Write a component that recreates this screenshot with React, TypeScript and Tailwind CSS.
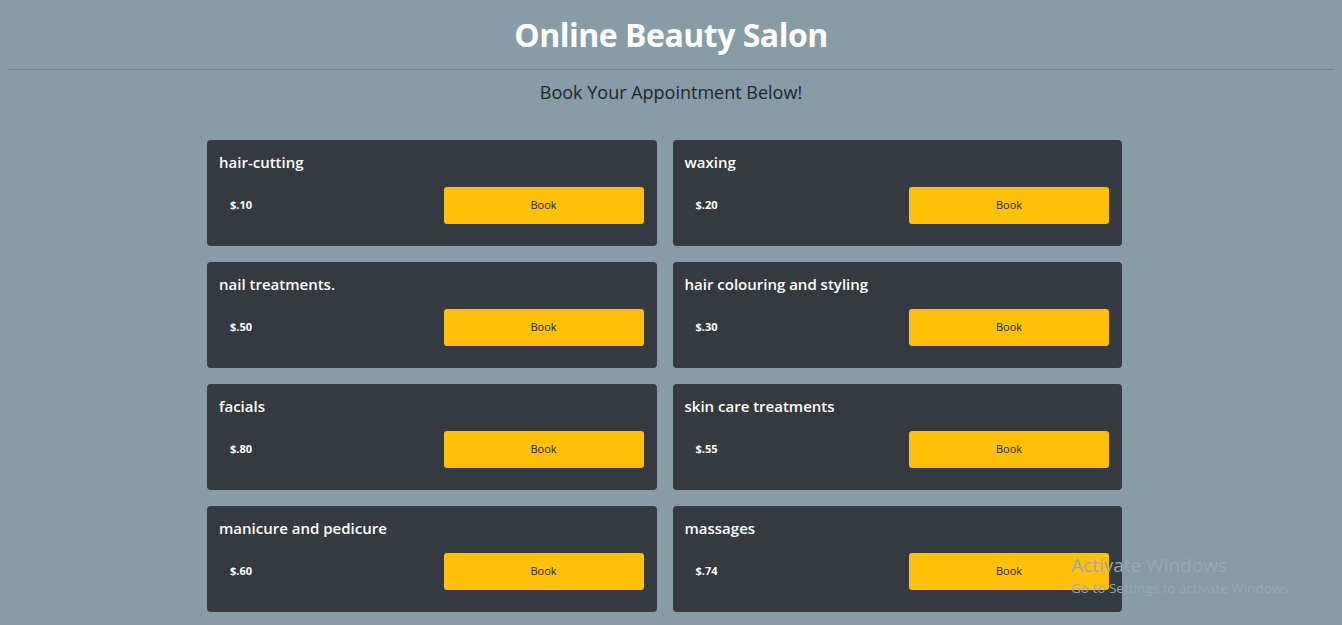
const services = [
  { name: "hair-cutting", price: "$.10" },
  { name: "waxing", price: "$.20" },
  { name: "nail treatments.", price: "$.50" },
  { name: "hair colouring and styling", price: "$.30" },
  { name: "facials", price: "$.80" },
  { name: "skin care treatments", price: "$.55" },
  { name: "manicure and pedicure", price: "$.60" },
  { name: "massages", price: "$.74" },
];

function ServiceCard({ name, price }: { name: string; price: string }) {
  return (
    <div className="bg-[#343a40] rounded-[4px] h-[106px] pt-[10px] pl-3 pr-[13px]">
      <h5 className="text-white text-[15px] font-semibold leading-6">{name}</h5>
      <div className="flex items-center justify-between mt-[13px]">
        <span className="text-white text-[11px] font-bold pl-[11px]">{price}</span>
        <button className="bg-[#ffc107] w-[200px] h-[37px] rounded-[3px] text-[11px] text-[#212529]">
          Book
        </button>
      </div>
    </div>
  );
}

export default function App() {
  return (
    <div
      className="min-h-[625px] bg-[#869ca7] px-2 pb-4 relative"
      style={{ fontFamily: '"Open Sans", "Noto Sans", sans-serif' }}
    >
      <h1 className="text-center text-white text-[32px] font-bold leading-[69px] tracking-[-0.5px]">
        Online Beauty Salon
      </h1>
      <hr className="border-t border-[#71868f]" />
      <p className="text-center text-[#212529] text-[18px] leading-[44px]">
        Book Your Appointment Below!
      </p>

      <div className="grid grid-cols-2 gap-x-4 gap-y-4 w-[915px] ml-[199px] mt-[26px]">
        {services.map((s) => (
          <ServiceCard key={s.name} name={s.name} price={s.price} />
        ))}
      </div>

      <div className="absolute left-[1071px] top-[553px] text-[#9aa9b0] pointer-events-none">
        <div className="text-[19px] leading-6">Activate Windows</div>
        <div className="text-[13.5px] leading-5 mt-[1px]">Go to Settings to activate Windows.</div>
      </div>
    </div>
  );
}
